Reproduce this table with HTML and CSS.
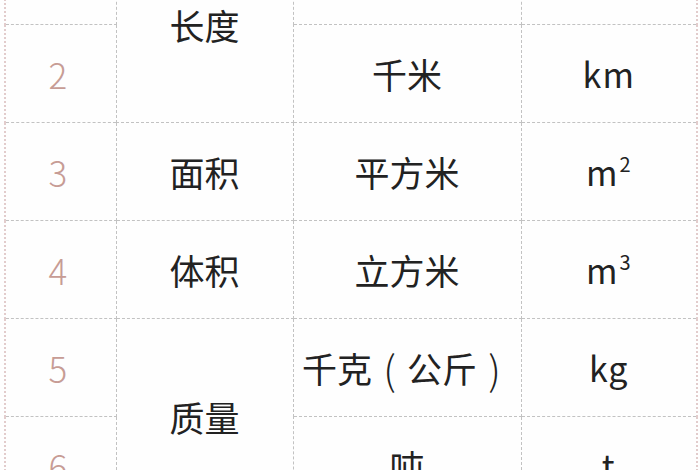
FILE: index.html
```html
<!DOCTYPE html>
<html lang="zh">
<head>
<meta charset="utf-8">
<link rel="stylesheet" href="styles.css">
</head>
<body>
<div class="page">
<table class="units">
  <colgroup>
    <col class="c-no"><col class="c-cat"><col class="c-name"><col class="c-sym">
  </colgroup>
  <tr>
    <td class="no">1</td>
    <td class="cat" rowspan="2">长度</td>
    <td>米</td>
    <td class="sym">m</td>
  </tr>
  <tr>
    <td class="no">2</td>
    <td>千米</td>
    <td class="sym">km</td>
  </tr>
  <tr>
    <td class="no">3</td>
    <td class="cat">面积</td>
    <td>平方米</td>
    <td class="sym">m<sup>2</sup></td>
  </tr>
  <tr>
    <td class="no">4</td>
    <td class="cat">体积</td>
    <td>立方米</td>
    <td class="sym">m<sup>3</sup></td>
  </tr>
  <tr>
    <td class="no">5</td>
    <td class="cat" rowspan="2">质量</td>
    <td>千克<span class="paren">(</span>公斤<span class="paren">)</span></td>
    <td class="sym">kg</td>
  </tr>
  <tr>
    <td class="no">6</td>
    <td>吨</td>
    <td class="sym">t</td>
  </tr>
</table>
</div>
</body>
</html>
```

FILE: styles.css
```css
html, body {
  margin: 0;
  padding: 0;
  background: #fefefe;
}
.page {
  width: 700px;
  height: 470px;
  overflow: hidden;
}
.units {
  margin-top: -74px;
  margin-left: 4px;
  border-collapse: collapse;
  table-layout: fixed;
  width: 692px;
  font-family: "Noto Sans CJK SC", sans-serif;
  font-size: 35px;
  color: #222;
}
.c-no { width: 111px; }
.c-cat { width: 177px; }
.c-name { width: 228px; }
.c-sym { width: 176px; }
.units td {
  height: 97px;
  padding: 0;
  text-align: center;
  vertical-align: middle;
  border: 1px dashed #c2c2c2;
  line-height: 1;
}
.units td:first-child {
  border-left: 2px dotted #e2cccc;
}
.units td.sym:last-child {
  border-right: 2px dotted #e2cccc;
}
.no {
  color: #c79c95;
  font-size: 35px;
  font-weight: 300;
  padding-right: 6px !important;
}
.paren {
  display: inline-block;
  width: 35px;
  text-align: center;
  font-size: 40px;
  font-weight: 300;
  line-height: 1;
  vertical-align: -2px;
}
.sym {
  font-size: 34px;
  letter-spacing: 1px;
}
.sym sup {
  font-size: 20px;
  vertical-align: 14px;
  line-height: 0;
  margin-left: 1px;
}
```
